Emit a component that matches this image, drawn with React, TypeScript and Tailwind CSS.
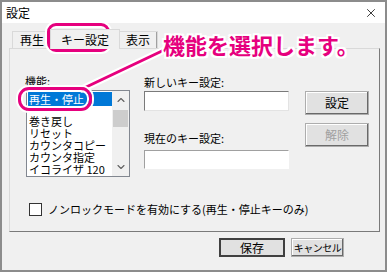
import { ChevronDown, ChevronUp, X } from "lucide-react";

const font = "font-['Noto_Sans_CJK_JP','Noto_Sans',sans-serif]";

const items = ["巻き戻し", "リセット", "カウンタコピー", "カウンタ指定", "イコライザ 120"];

function Tab({ label, active }: { label: string; active?: boolean }) {
  return active ? (
    <div className="relative z-10 -mx-[2px] -mb-px flex h-[20px] items-center border border-b-0 border-[#d9d9d9] bg-[#f0f0f0] px-[10px]">
      {label}
    </div>
  ) : (
    <div className="flex h-[17px] items-center border border-b-0 border-[#d9d9d9] bg-[#f0f0f0] px-[7px] shadow-[inset_-1px_0_0_#a0a0a0]">
      {label}
    </div>
  );
}

function WinButton({ label, disabled, strong, className }: { label: string; disabled?: boolean; strong?: boolean; className?: string }) {
  return (
    <button
      className={`flex items-center justify-center whitespace-nowrap bg-[#e1e1e1] ${
        strong ? "border-2 border-[#404040]" : "border border-[#adadad] shadow-[inset_-1px_-1px_0_#696969,inset_1px_1px_0_#fff]"
      } ${disabled ? "text-[#a0a0a0]" : "text-black"} ${className ?? ""}`}
    >
      {label}
    </button>
  );
}

export default function App() {
  return (
    <div className={`relative flex h-[272px] w-[387px] flex-col whitespace-nowrap border-2 border-[#8c8c8c] bg-[#f0f0f0] text-[11px] leading-[14px] text-black ${font}`}>
      {/* title bar */}
      <div className="flex h-[21px] items-center justify-between bg-white pl-[4px] pr-[7px] text-[12px]">
        <span>設定</span>
        <X className="h-[14px] w-[14px]" strokeWidth={1.3} />
      </div>

      {/* tabs */}
      <div className="ml-[10px] mt-[6px] flex items-end text-[12px]">
        <Tab label="再生" />
        <Tab label="キー設定" active />
        <Tab label="表示" />
      </div>

      {/* tab panel */}
      <div className="ml-[7px] mr-[5px] flex h-[184px] flex-col border border-[#d9d9d9] border-b-[#7a7a7a] border-r-[#7a7a7a] bg-[#f0f0f0] pl-[15px] pt-[25px]">
        <div className="flex">
          {/* function list */}
          <div className="flex w-[105px] flex-col">
            <span>機能:</span>
            <div className="ml-px mt-[2px] flex h-[87px] w-[104px] border border-[#828790] bg-white">
              <div className="flex flex-1 flex-col pl-px pt-px">
                <div className="flex h-[14px] items-center bg-[#0078d7] pl-px text-white">再生・停止</div>
                <div className="h-[9px]" />
                {items.map((it) => (
                  <div key={it} className="flex h-[12px] items-center pl-px leading-[12px]">
                    {it}
                  </div>
                ))}
              </div>
              <div className="flex w-[17px] flex-col items-center bg-[#f0f0f0]">
                <ChevronUp className="mt-[2px] h-[14px] w-[12px] text-[#606060]" strokeWidth={2.2} />
                <div className="mt-[3px] h-[17px] w-[15px] bg-[#cdcdcd]" />
                <ChevronDown className="mt-auto mb-[2px] h-[14px] w-[12px] text-[#606060]" strokeWidth={2.2} />
              </div>
            </div>
          </div>

          {/* key fields */}
          <div className="ml-[14px] flex w-[145px] flex-col">
            <span className="mt-px">新しいキー設定:</span>
            <div className="mt-[2px] h-[20px] border border-[#7a7a7a] border-b-[#e3e3e3] border-r-[#e3e3e3] bg-white" />
            <span className="mt-[20px]">現在のキー設定:</span>
            <div className="mt-[5px] h-[19px] border border-[#a0a0a0] border-b-white border-r-white bg-white" />
          </div>

          {/* buttons */}
          <div className="ml-[16px] mt-[17px] flex flex-col gap-[8px] text-[12px]">
            <WinButton label="設定" className="h-[24px] w-[64px]" />
            <WinButton label="解除" disabled className="h-[24px] w-[64px]" />
          </div>
        </div>

        <div className="ml-[4px] mt-[25px] flex items-center gap-[6px]">
          <div className="h-[13px] w-[13px] border border-[#333] bg-white" />
          <span>ノンロックモードを有効にする(再生・停止キーのみ)</span>
        </div>
      </div>

      {/* dialog buttons */}
      <div className="mr-[41px] mt-[6px] flex justify-end gap-[6px]">
        <WinButton label="保存" strong className="h-[19px] w-[66px] text-[12px]" />
        <WinButton label="キャンセル" className="h-[19px] w-[53px] text-[10px] tracking-[-0.5px]" />
      </div>

      {/* annotation overlay */}
      <svg className="pointer-events-none absolute left-[-2px] top-[-2px]" width="387" height="272">
        <line x1="82" y1="89" x2="162" y2="51" stroke="#fff" strokeWidth="7" strokeLinecap="round" />
        <line x1="82" y1="89" x2="162" y2="51" stroke="#e6007e" strokeWidth="3" strokeLinecap="round" />
      </svg>
      <div className="pointer-events-none absolute left-[45px] top-[21px] h-[29px] w-[63px] rounded-[9px] border-[3px] border-[#e6007e] shadow-[0_0_0_2px_#fff,inset_0_0_0_2px_#fff]" />
      <div className="pointer-events-none absolute left-[16px] top-[85px] h-[24px] w-[74px] rounded-[11px] border-[3px] border-[#e6007e] shadow-[0_0_0_2px_#fff,inset_0_0_0_2px_#fff]" />
      <div className="pointer-events-none absolute left-[161px] top-[29px] text-[22px] font-bold leading-[26px] text-[#e6007e] [text-shadow:2px_0_0_#fff,-2px_0_0_#fff,0_2px_0_#fff,0_-2px_0_#fff,2px_2px_0_#fff,-2px_-2px_0_#fff,2px_-2px_0_#fff,-2px_2px_0_#fff]">
        機能を選択します。
      </div>
    </div>
  );
}
